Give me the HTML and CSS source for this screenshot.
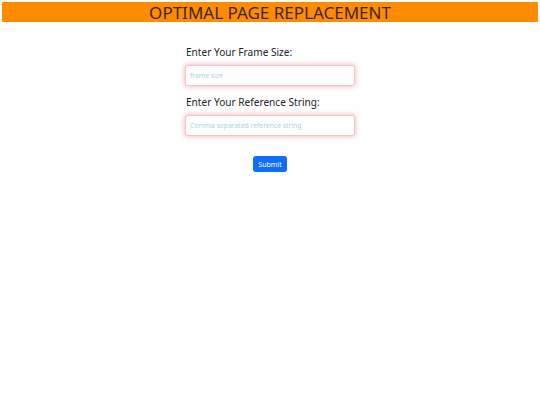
FILE: index.html
```html
<!DOCTYPE html>
<html>
<head>
<meta charset="utf-8">
<link rel="stylesheet" href="styles.css">
</head>
<body>
<header class="title-bar">OPTIMAL PAGE REPLACEMENT</header>
<main class="form-wrap">
  <form class="form">
    <label class="label" for="fs">Enter Your Frame Size:</label>
    <input class="field" id="fs" type="text" placeholder="frame size">
    <label class="label second" for="rs">Enter Your Reference String:</label>
    <input class="field" id="rs" type="text" placeholder="Comma separated reference string">
    <div class="actions"><button class="btn" type="button">Submit</button></div>
  </form>
</main>
</body>
</html>
```
FILE: styles.css
```css
html, body { margin: 0; padding: 0; background: #fff; }
body { font-family: "Noto Sans", "Open Sans", sans-serif; color: #212529; }
.title-bar {
  margin: 2px 2px 0 2px;
  height: 20px;
  background: #ff8c00;
  color: #3b2608;
  font-size: 17px;
  line-height: 21px;
  text-align: center;
}
.form-wrap { display: flex; justify-content: center; padding-top: 23px; }
.form { width: 170px; display: flex; flex-direction: column; }
.label { font-size: 10.1px; line-height: 14px; margin: 0 0 6px 1px; color: #212529; }
.label.second { margin-top: 9px; }
.field {
  box-sizing: border-box;
  width: 170px;
  height: 21px;
  border: 1px solid #f6c4c8;
  border-radius: 3px;
  box-shadow: 0 0 4px 1px rgba(240, 120, 130, 0.45);
  padding: 0 4px;
  font-family: inherit;
  font-size: 6.8px;
  outline: none;
}
.field::placeholder { color: #a9d3e3; }
.actions { display: flex; justify-content: center; margin-top: 20px; }
.btn {
  width: 34px;
  height: 16px;
  padding: 0;
  border: none;
  border-radius: 3px;
  background: #0d6efd;
  color: #fff;
  font-family: inherit;
  font-size: 7px;
}
```
